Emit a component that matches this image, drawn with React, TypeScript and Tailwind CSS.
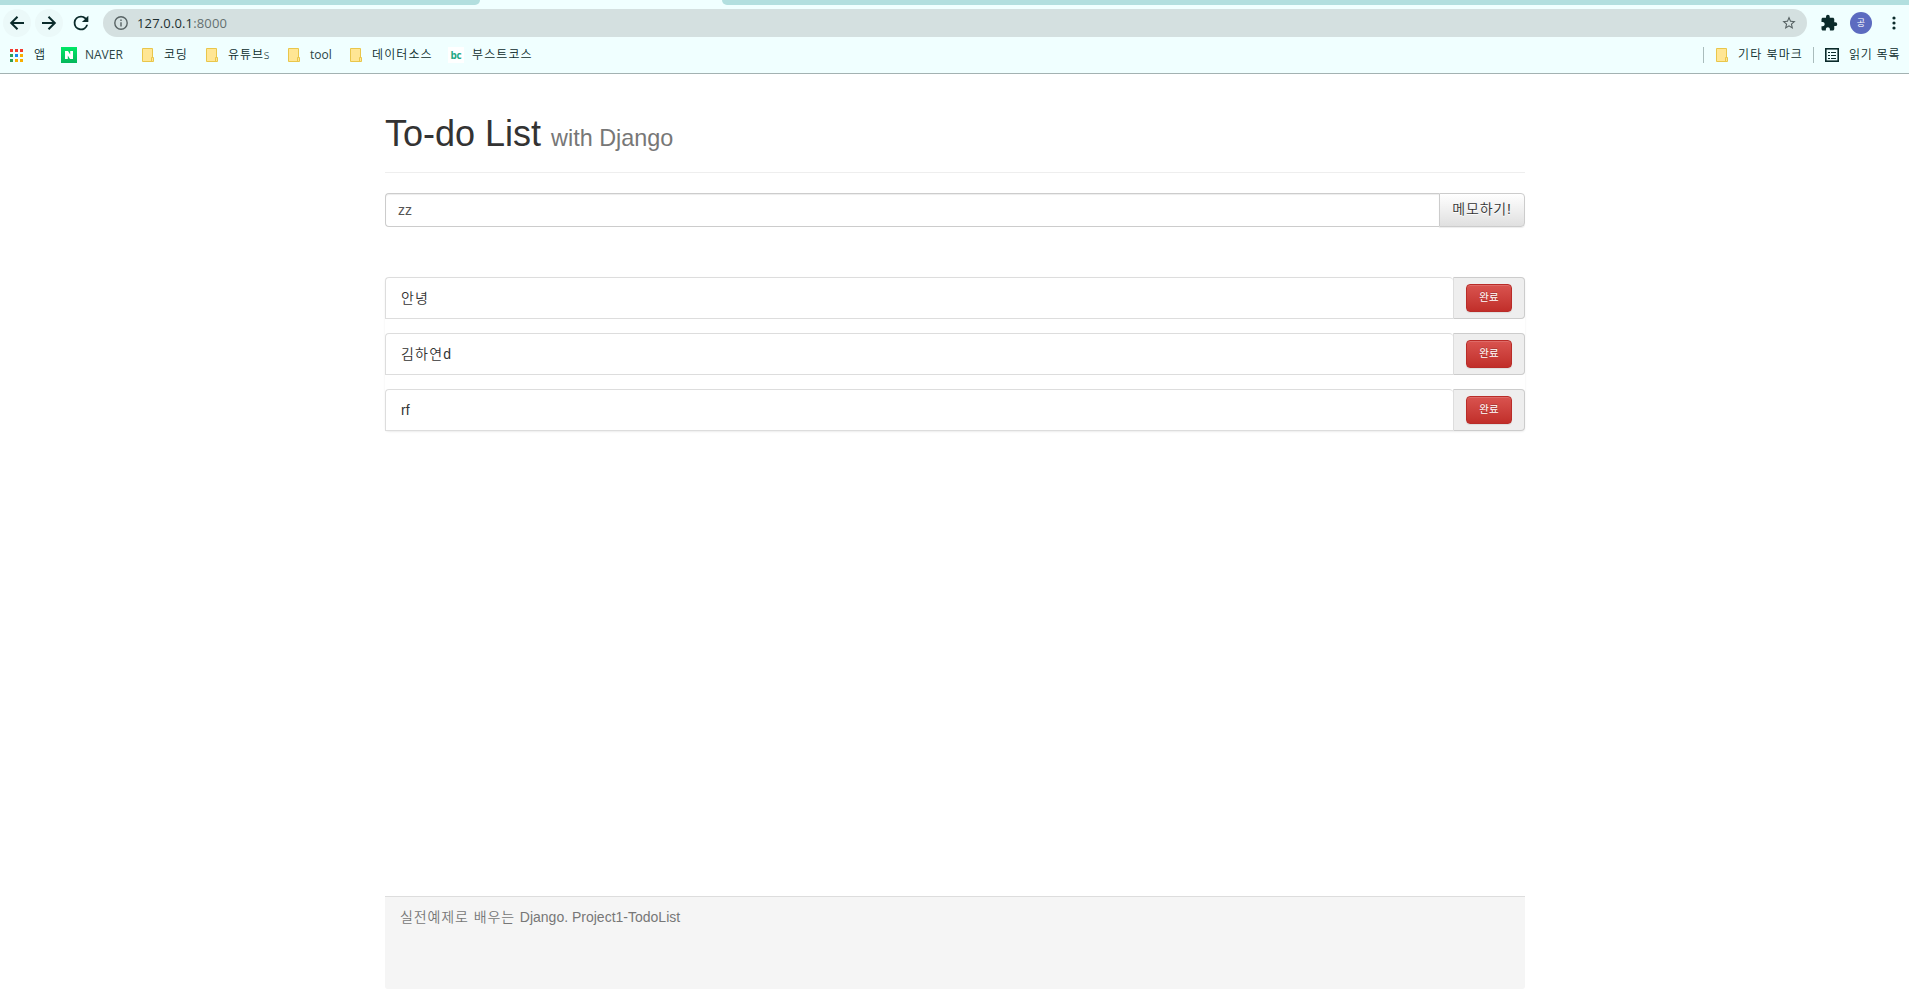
import React from "react";

const uiFont = "font-['Open_Sans','Noto_Sans_CJK_KR',sans-serif]";
const pageFont = "font-['Liberation_Sans','Noto_Sans_CJK_KR',sans-serif]";

function Folder() {
  return (
    <svg width="12" height="14" viewBox="0 0 12 14" className="shrink-0">
      <path d="M.5.5h10v9h1v4H.5z" fill="#ffe694" stroke="#e9c64b" />
      <path d="M9.500 13V9.500h1.500" fill="none" stroke="#e9c64b" />
    </svg>
  );
}

function AppsIcon() {
  const colors = ["#f23a2f", "#f23a2f", "#f23a2f", "#2f9e57", "#1a86f0", "#f9ae00", "#2f9e57", "#f9ae00", "#f9ae00"];
  return (
    <svg width="13" height="13" viewBox="0 0 13 13" className="shrink-0" shapeRendering="crispEdges">
      {colors.map((c, i) => (
        <rect key={i} x={(i % 3) * 5} y={Math.floor(i / 3) * 5} width="3" height="3" fill={c} />
      ))}
    </svg>
  );
}

function NaverIcon() {
  return (
    <svg width="16" height="16" viewBox="0 0 16 16" className="shrink-0">
      <defs>
        <linearGradient id="nv" x1="0" y1="0" x2="0" y2="1">
          <stop offset="0" stopColor="#00e865" />
          <stop offset="1" stopColor="#06b65b" />
        </linearGradient>
      </defs>
      <rect width="16" height="16" fill="url(#nv)" />
      <path d="M4 4h3l2.200 3.400V4H12v8H9L6.800 8.600V12H4z" fill="#fff" />
    </svg>
  );
}

function BcIcon() {
  return (
    <span className="flex h-4 w-4 shrink-0 items-center justify-center bg-white text-[10px] leading-none font-bold tracking-[-0.3px] text-[#22a884]">
      bc
    </span>
  );
}

type BookmarkProps = { icon: React.ReactNode; width: string; gap: string; label: string; text?: string };

function Bookmark({ icon, width, gap, label, text = "" }: BookmarkProps) {
  return (
    <div className={`flex h-4 shrink-0 items-center whitespace-nowrap ${width} ${gap}`}>
      {icon}
      <span className={text}>{label}</span>
    </div>
  );
}

function Browser() {
  return (
    <header className={`h-[74px] border-b border-[#a3b2b2] bg-[#f0ffff] text-[#0b2b2b] ${uiFont}`}>
      <div className="flex h-[5px] justify-between">
        <div className="w-[480px] rounded-br-[5px] bg-[#b2dfdf]" />
        <div className="w-[1187px] rounded-bl-[5px] bg-[#b2dfdf]" />
      </div>
      <div className="mt-1 flex h-7 items-center pl-[3px]">
        <div className="flex h-7 w-7 items-center justify-center rounded-full bg-[#ebf9f9]">
          <svg width="16" height="16" viewBox="0 0 16 16" fill="none" stroke="#0b2b2b" strokeWidth="2">
            <path d="M15 8H2.500M8.500 1.700 2.200 8l6.300 6.300" />
          </svg>
        </div>
        <div className="ml-1 flex h-7 w-7 items-center justify-center rounded-full bg-[#ebf9f9]">
          <svg width="16" height="16" viewBox="0 0 16 16" fill="none" stroke="#0b2b2b" strokeWidth="2">
            <path d="M1 8h12.500M7.500 1.700 13.800 8l-6.300 6.300" />
          </svg>
        </div>
        <div className="ml-1 flex h-7 w-7 items-center justify-center">
          <svg width="22" height="22" viewBox="0 0 24 24" fill="#0b2b2b">
            <path d="M17.650 6.350A7.960 7.960 0 0 0 12 4a8 8 0 1 0 7.730 10h-2.080A6 6 0 1 1 12 6c1.660 0 3.140.69 4.220 1.780L13 11h7V4z" />
          </svg>
        </div>
        <div className="ml-2 flex h-7 w-[1704px] items-center rounded-full bg-[#d4e0e0] pr-[10px] pl-[11px]">
          <svg width="14" height="14" viewBox="0 0 14 14" fill="none" stroke="#586364" strokeWidth="1.400">
            <circle cx="7" cy="7" r="6.200" />
            <path d="M7 6.200v4.300M7 3.500v1.400" />
          </svg>
          <span className="ml-[9px] text-[13px] leading-[18px] tracking-[0.15px] text-[#1d2f2f]">
            127.0.0.1<span className="text-[#647070]">:8000</span>
          </span>
          <svg width="16" height="16" viewBox="0 0 24 24" className="ml-auto" fill="#566162">
            <path d="m22 9.240-7.190-.62L12 2 9.190 8.630 2 9.240l5.460 4.730L5.820 21 12 17.270 18.180 21l-1.630-7.030zM12 15.400l-3.760 2.270 1-4.280-3.320-2.880 4.380-.38L12 6.100l1.710 4.040 4.380.38-3.320 2.880 1 4.280z" />
          </svg>
        </div>
        <svg width="18" height="18" viewBox="0 0 24 24" className="ml-[13px]" fill="#0b2b2b">
          <path d="M20.500 11H19V7c0-1.100-.9-2-2-2h-4V3.500a2.500 2.500 0 0 0-5 0V5H4c-1.100 0-1.990.9-1.990 2v3.800H3.500c1.490 0 2.700 1.210 2.700 2.700s-1.210 2.700-2.700 2.700H2V20c0 1.100.9 2 2 2h3.800v-1.500c0-1.490 1.210-2.700 2.700-2.700s2.700 1.210 2.700 2.700V22H17c1.100 0 2-.9 2-2v-4h1.500a2.500 2.500 0 0 0 0-5" />
        </svg>
        <div className="ml-3 flex h-[22px] w-[22px] items-center justify-center rounded-full bg-[#5c6bc0] pb-0.5 text-[9px] leading-none text-white">
          공
        </div>
        <svg width="4" height="14" viewBox="0 0 4 14" className="ml-5" fill="#0b2b2b">
          <circle cx="2" cy="2" r="1.600" />
          <circle cx="2" cy="7" r="1.600" />
          <circle cx="2" cy="12" r="1.600" />
        </svg>
      </div>
      <nav className="mt-[10px] flex h-4 items-center pl-[10px] text-[12px] leading-4 font-[350]">
        <Bookmark icon={<AppsIcon />} width="w-[51px]" gap="gap-[11px]" label="앱" />
        <Bookmark icon={<NaverIcon />} width="w-[81px]" gap="gap-2" label="NAVER" text="font-normal text-[#2b4545]" />
        <Bookmark icon={<Folder />} width="w-16" gap="gap-[10px]" label="코딩" text="tracking-[0.6px]" />
        <Bookmark icon={<Folder />} width="w-[82px]" gap="gap-[10px]" label="유튜브s" text="tracking-[0.9px]" />
        <Bookmark icon={<Folder />} width="w-[62px]" gap="gap-[10px]" label="tool" text="font-normal text-[#2b4545]" />
        <Bookmark icon={<Folder />} width="w-[98px]" gap="gap-[10px]" label="데이터소스" text="tracking-[1.1px]" />
        <Bookmark icon={<BcIcon />} width="w-[90px]" gap="gap-2" label="부스트코스" text="tracking-[1.1px]" />
        <div className="ml-auto h-4 w-px bg-[#a9bcbc]" />
        <div className="w-3" />
        <Bookmark icon={<Folder />} width="w-[97px]" gap="gap-[10px]" label="기타 북마크" text="tracking-[1.1px]" />
        <div className="h-4 w-px bg-[#a9bcbc]" />
        <div className="w-[11px]" />
        <Bookmark
          icon={
            <svg width="14" height="14" viewBox="0 0 14 14" className="shrink-0" stroke="#0b2b2b" fill="none">
              <rect x=".8" y=".8" width="12.400" height="12.400" strokeWidth="1.600" />
              <path d="M3 4.500h2M6 4.500h5M3 7.500h2M6 7.500h5M3 10.500h2M6 10.500h5" strokeWidth="1" />
            </svg>
          }
          width="w-[84px]"
          gap="gap-[10px]"
          label="읽기 목록"
          text="tracking-[0.8px]"
        />
      </nav>
    </header>
  );
}

function TodoRow({ children }: { children: React.ReactNode }) {
  return (
    <li className="flex h-[42px]">
      <div className="flex flex-1 items-center rounded-t-[4px] border border-r-0 border-[#ddd] pl-[15px] text-sm leading-5 text-[#333]">
        <span>{children}</span>
      </div>
      <div className="flex w-[72px] items-center justify-center rounded-r-[4px] border border-[#ccc] border-l-[#ddd] bg-[#eee]">
        <button className="flex h-7 w-[46px] items-center justify-center rounded-[4px] border border-[#b92c28] bg-linear-to-b from-[#d9534f] to-[#c12e2a] pb-0.5 text-[10.500px] leading-none text-white shadow-[inset_0_1px_0_rgba(255,255,255,0.15),0_1px_1px_rgba(0,0,0,0.075)] [text-shadow:0_-1px_0_rgba(0,0,0,0.2)]">
          완료
        </button>
      </div>
    </li>
  );
}

export default function App() {
  return (
    <div className="flex h-[999px] flex-col overflow-hidden bg-white">
      <Browser />
      <main className={`ml-[385px] flex w-[1140px] flex-1 flex-col text-[#333] ${pageFont}`}>
        <h1 className="mt-10 h-[59px] border-b border-[#eee] text-[36px] leading-[40px] font-medium">
          To-do List <small className="text-[23.4px] font-normal text-[#777]">with Django</small>
        </h1>
        <form className="mt-5 flex h-[34px]">
          <input
            defaultValue="zz"
            className="min-w-0 flex-1 rounded-l-[4px] border border-r-0 border-[#ccc] px-3 text-sm text-[#555] shadow-[inset_0_1px_1px_rgba(0,0,0,0.075)] outline-none"
          />
          <button
            type="button"
            className="w-[86px] rounded-r-[4px] border border-[#ccc] bg-linear-to-b from-white to-[#e0e0e0] pb-0.5 text-sm leading-5 font-[350] tracking-[0.8px] whitespace-nowrap text-[#333] shadow-[0_1px_1px_rgba(0,0,0,0.075)] [text-shadow:0_1px_0_#fff]"
          >
            메모하기!
          </button>
        </form>
        <ul className="mt-[50px] flex flex-col gap-[14px] rounded-[4px] shadow-[0_1px_2px_rgba(0,0,0,0.075)]">
          <TodoRow>
            <span className="font-[350] tracking-[1.2px]">안녕</span>
          </TodoRow>
          <TodoRow>
            <span className="font-[350] tracking-[1.2px]">김하연</span>d
          </TodoRow>
          <TodoRow>rf</TodoRow>
        </ul>
        <footer className="mt-auto mb-[10px] h-[93px] rounded-b-[3px] border-t border-[#ddd] bg-[#f5f5f5] px-[15px] py-[10px] text-sm leading-5 text-[#777]">
          <span className="font-[350] tracking-[0.9px]">실전예제로 배우는 </span>Django. Project1-TodoList
        </footer>
      </main>
    </div>
  );
}
